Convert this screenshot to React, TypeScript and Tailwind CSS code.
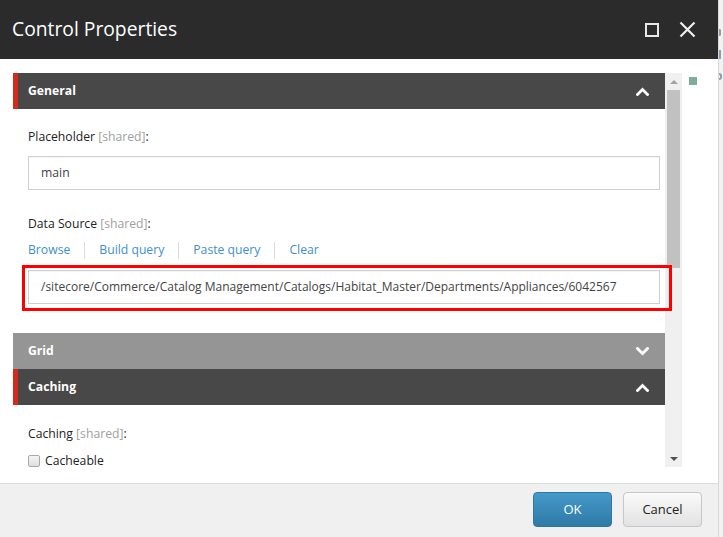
import React from "react";

const font = { fontFamily: '"Open Sans", "Noto Sans", sans-serif' };

const label = "text-[12.2px] leading-[18px] text-[#222]";
const field =
  "h-[34px] w-[632px] whitespace-nowrap overflow-hidden border border-[#cfcfcf] bg-white pl-[12px] leading-[32px] text-[#444] shadow-[inset_0_1px_1px_rgba(0,0,0,0.04)]";

function Chevron({ up }: { up?: boolean }) {
  return (
    <svg width="13" height="9" viewBox="0 0 13 9" className="block">
      <path
        d={up ? "M1.5 7.5 L6.5 2.5 L11.5 7.5" : "M1.5 1.5 L6.5 6.5 L11.5 1.5"}
        fill="none"
        stroke="#fff"
        strokeWidth="2.8"
        strokeLinecap="square"
      />
    </svg>
  );
}

function SectionHeader({ title, open, active }: { title: string; open?: boolean; active?: boolean }) {
  return (
    <div
      className={
        "flex h-[36px] items-center justify-between pr-[16px] " +
        (active ? "border-l-[5px] border-[#d32a1c] bg-[#484848] pl-[10px]" : "bg-[#959595] pl-[15px]")
      }
    >
      <span className="text-[12.2px] font-bold text-white">{title}</span>
      <Chevron up={open} />
    </div>
  );
}

function Shared() {
  return <span className="text-[#a0a0a0]">[shared]</span>;
}

export default function App() {
  const links = ["Browse", "Build query", "Paste query", "Clear"];
  return (
    <div className="flex h-[537px] w-[723px] overflow-hidden bg-[#f2f2f2]" style={font}>
      <div className="flex w-[718px] shrink-0 flex-col bg-white">
        {/* title bar */}
        <div className="flex h-[59px] shrink-0 items-center justify-between bg-[#2b2b2b] pl-[12px] pr-[22px]">
          <span className="text-[19.3px] text-white">Control Properties</span>
          <div className="flex items-center gap-[20px]">
            <div className="h-[14px] w-[14px] border-2 border-[#e8e8e8]" />
            <svg width="17" height="17" viewBox="0 0 17 17">
              <path d="M1.5 1.5 L15.5 15.5 M15.5 1.5 L1.5 15.5" stroke="#eee" strokeWidth="2.2" />
            </svg>
          </div>
        </div>

        {/* body */}
        <div className="flex h-[424px] shrink-0 pl-[13px] pt-[14px]">
          <div className="relative w-[652px] shrink-0">
            <SectionHeader title="General" open active />
            <div className="flex flex-col pl-[15px]">
              <div className={"mt-[19px] " + label}>
                Placeholder <Shared />:
              </div>
              <div className={"mt-[10px] text-[12.2px] " + field}>main</div>
              <div className={"mt-[25px] " + label}>
                Data Source <Shared />:
              </div>
              <div className="mt-[8px] flex h-[18px] items-center text-[12.2px] text-[#3e8fcb]">
                {links.map((l, i) => (
                  <React.Fragment key={l}>
                    {i > 0 && <span className="mx-[14px] h-[17px] w-px bg-[#dcdcdc]" />}
                    <span>{l}</span>
                  </React.Fragment>
                ))}
              </div>
              <div className="relative mt-[11px]">
                <div className={"text-[12px] " + field}>
                  /sitecore/Commerce/Catalog Management/Catalogs/Habitat_Master/Departments/Appliances/6042567
                </div>
                <div className="absolute -bottom-[7px] -left-[6px] -right-[7px] -top-[5px] z-10 border-[3px] border-[#f00]" />
              </div>
            </div>
            <div className="mt-[29px]">
              <div className="border-b border-[#d6d6d6]">
                <div className="-mb-px">
                  <SectionHeader title="Grid" />
                </div>
              </div>
              <SectionHeader title="Caching" open active />
            </div>
            <div className="flex flex-col pl-[15px]">
              <div className={"mt-[20px] " + label}>
                Caching <Shared />:
              </div>
              <label className="mt-[9px] flex h-[18px] items-center gap-[5px] text-[12.2px] text-[#222]">
                <span className="h-[12px] w-[12px] rounded-[2px] border border-[#a9a9a9] bg-gradient-to-b from-[#f4f4f4] to-[#dedede]" />
                Cacheable
              </label>
            </div>
          </div>

          {/* scrollbar */}
          <div className="flex h-[394px] w-[17px] shrink-0 flex-col items-center bg-[#f0f0f0]">
            <div className="flex h-[17px] w-full items-center justify-center">
              <div className="h-0 w-0 border-x-[4px] border-b-[4px] border-x-transparent border-b-[#a3a3a3]" />
            </div>
            <div className="h-[178px] w-[13px] bg-[#c1c1c1]" />
            <div className="flex-1" />
            <div className="flex h-[17px] w-full items-center justify-center">
              <div className="h-0 w-0 border-x-[4px] border-t-[4px] border-x-transparent border-t-[#505050]" />
            </div>
          </div>

          <div className="ml-[7px] mt-[4px] h-[8px] w-[8px] bg-[#7eae99]" />
        </div>

        {/* footer */}
        <div className="flex flex-1 items-start justify-end gap-[11px] border-t border-[#dcdcdc] bg-[#f0f0f0] pr-[16px] pt-[8px]">
          <button className="h-[35px] w-[79px] rounded-[4px] border border-[#2f77a3] bg-gradient-to-b from-[#4599c9] to-[#2f7aa7] text-[13px] text-white">
            OK
          </button>
          <button className="h-[35px] w-[79px] rounded-[4px] border border-[#c6c6c6] bg-gradient-to-b from-[#fafafa] to-[#e2e2e2] text-[13px] text-[#222]">
            Cancel
          </button>
        </div>
      </div>

      {/* page behind the dialog: glimpses of cut-off text */}
      <div className="flex flex-1 flex-col gap-[14px] overflow-hidden border-l border-[#d8d8d8] pt-[29px]">
        <div className="h-[7px] w-[2px] rounded-r-full border-2 border-l-0 border-[#8c9bb8]" />
        <div className="h-[9px] w-[2px] border-r-2 border-[#8c9bb8]" />
        <div className="h-[7px] w-[3px] rounded-r-full border-2 border-l-0 border-[#8c9bb8]" />
      </div>
    </div>
  );
}
